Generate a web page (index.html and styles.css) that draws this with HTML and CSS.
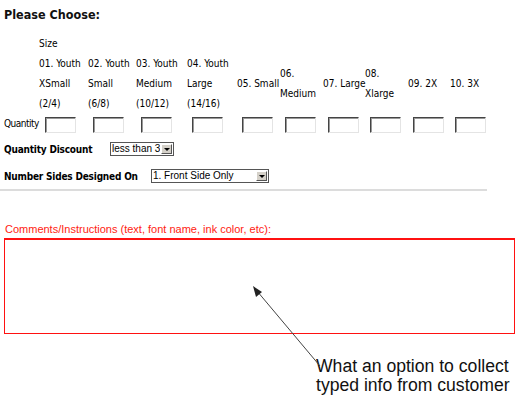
FILE: index.html
```html
<!DOCTYPE html>
<html lang="en">
<head>
  <meta charset="UTF-8">
  <title>Please Choose</title>
  <link rel="stylesheet" href="styles.css">
</head>
<body>
  <h2 class="title">Please Choose:</h2>

  <div class="sizes">
    <div></div>
    <div class="size-label">Size</div>

    <div></div>
    <div class="size">01. Youth<br>XSmall<br>(2/4)</div>
    <div class="size">02. Youth<br>Small<br>(6/8)</div>
    <div class="size">03. Youth<br>Medium<br>(10/12)</div>
    <div class="size">04. Youth<br>Large<br>(14/16)</div>
    <div class="size">05. Small</div>
    <div class="size">06.<br>Medium</div>
    <div class="size">07. Large</div>
    <div class="size">08.<br>Xlarge</div>
    <div class="size">09. 2X</div>
    <div class="size">10. 3X</div>

    <div class="qty-label">Quantity</div>
    <div><input class="qty first" type="text"></div>
    <div><input class="qty" type="text"></div>
    <div><input class="qty" type="text"></div>
    <div><input class="qty" type="text"></div>
    <div><input class="qty" type="text"></div>
    <div><input class="qty" type="text"></div>
    <div><input class="qty" type="text"></div>
    <div><input class="qty" type="text"></div>
    <div><input class="qty" type="text"></div>
    <div><input class="qty" type="text"></div>
  </div>

  <div class="option discount">
    <label>Quantity Discount</label>
    <span class="dropdown short">
      <select><option>less than 3</option></select>
      <span class="drop-btn"></span>
    </span>
  </div>

  <div class="option sides">
    <label>Number Sides Designed On</label>
    <span class="dropdown long">
      <select><option>1. Front Side Only</option></select>
      <span class="drop-btn"></span>
    </span>
  </div>

  <div class="rule"></div>

  <div class="comments">
    <p class="comments-label">Comments/Instructions (text, font name, ink color, etc):</p>
    <textarea></textarea>
    <svg class="pointer" width="80" height="90" viewBox="0 0 80 90">
      <line x1="72" y1="82" x2="9" y2="7" stroke="#444" stroke-width="1"/>
      <polygon points="5,2 8,13 14,8" fill="#222"/>
    </svg>
  </div>

  <p class="note">What an option to collect<br>typed info from customer</p>
</body>
</html>
```

FILE: styles.css
```css
* { box-sizing: border-box; margin: 0; padding: 0; }
body { font-family: "DejaVu Sans Condensed", "DejaVu Sans", sans-serif; font-stretch: condensed; font-size: 10px; color: #000; background-color: #fff; padding: 0 4px; width: 515px; height: 396px; overflow: hidden; }
.title { font-size: 12.5px; font-weight: bold; line-height: 16px; margin-top: 7px; color: #111; }
.sizes { display: grid; grid-template-columns: 35px 49px 48px 51px 50px 43px 43px 42px 43px 42px 42px; align-items: center; margin-top: 11px; line-height: 20px; white-space: nowrap; }
.size-label { grid-column: 2 / span 10; }
.qty-label { line-height: 16px; align-self: end; padding-bottom: 1px; letter-spacing: -0.5px; }
.qty { width: 31px; height: 16px; margin: 3px 0 0 5px; border: 1px solid; border-color: #444 #e4e4e4 #e4e4e4 #444; box-shadow: inset 1px 1px 0 #999; background: #fff; display: block; }
.qty.first { margin-left: 6px; }
.option { display: flex; align-items: center; font-weight: bold; }
.option label { display: block; letter-spacing: -0.2px; }
.discount { margin-top: 9px; }
.discount label { width: 106px; }
.sides { margin-top: 13px; }
.sides label { width: 147px; }
.dropdown { display: inline-flex; align-items: stretch; height: 14px; border: 1px solid #555; background: #fff; }
.dropdown.short { width: 64px; }
.dropdown.long { width: 118px; }
.dropdown select { appearance: none; -webkit-appearance: none; border: none; outline: none; background: transparent; flex: 1; min-width: 0; font-family: "Liberation Sans", Arial, sans-serif; font-size: 10px; line-height: 12px; height: 12px; padding: 0 0 0 1px; color: #000; }
.drop-btn { width: 11px; margin: 1px; background: #d4d0c8; border: 1px solid; border-color: #fff #555 #555 #fff; position: relative; }
.drop-btn::after { content: ""; position: absolute; left: 2px; top: 3px; border-left: 3px solid transparent; border-right: 3px solid transparent; border-top: 3px solid #000; }
.rule { width: 487px; height: 2px; margin: 6px 0 0 -4px; background: #dcdcdc; }
.comments { position: relative; margin-top: 31px; }
.comments-label { font-family: "Liberation Sans", Arial, sans-serif; font-size: 11px; line-height: 14px; color: #f21; padding-left: 1px; }
.comments textarea { display: block; width: 511px; height: 96px; margin-top: 2px; border: 1px solid #f11; border-top-width: 2px; background: #fff; resize: none; outline: none; }
.pointer { position: absolute; left: 244px; top: 62px; overflow: visible; }
.note { font-family: "Liberation Sans", Arial, sans-serif; font-size: 17.6px; line-height: 19px; color: #111; margin: 23px 0 0 312px; white-space: nowrap; }
```
